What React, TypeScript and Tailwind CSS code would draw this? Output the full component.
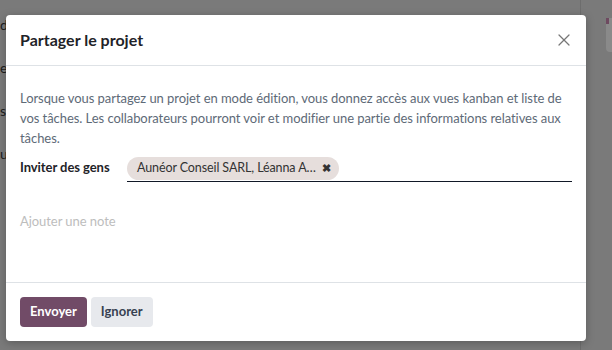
import { X } from 'lucide-react';

export default function App() {
  return (
    <div
      className="relative h-[350px] w-[612px] overflow-hidden bg-[#7a7a7a]"
      style={{ fontFamily: 'Lato, "Noto Sans", sans-serif' }}
    >
      {/* page behind the overlay */}
      <div className="absolute inset-0 flex">
        <div className="flex w-[6px] flex-col gap-[22px] pt-[14px] text-[14px] text-[#1d1d1d]">
          <span>d</span>
          <span>e</span>
          <span>s</span>
          <span>u</span>
        </div>
        <div className="ml-auto flex h-full w-[32px] border-l border-[#6d6d6d]">
          <div className="ml-auto mt-[18px] flex h-[34px] w-[6px] flex-col rounded-l bg-[#8a8a8a]">
            <div className="h-[6px] w-[3px] bg-[#6e4a60]" />
          </div>
        </div>
      </div>

      {/* dialog */}
      <div className="absolute left-[6px] top-[15px] flex h-[326px] w-[580px] flex-col rounded-[4px] bg-white shadow-[0_2px_8px_rgba(0,0,0,0.25)]">
        <div className="flex h-[51px] items-center justify-between border-b border-[#dee2e6] pl-[14px] pr-[12px]">
          <h1 className="text-[16px] font-bold text-[#1f2328]">Partager le projet</h1>
          <X className="h-[20px] w-[20px] text-[#777]" strokeWidth={1.5} />
        </div>

        <div className="flex flex-1 flex-col px-[14px] pt-[22px] text-[13px] tracking-[-0.06px]">
          <p className="leading-[20px] text-[#5e6a77]">
            Lorsque vous partagez un projet en mode édition, vous donnez accès aux vues kanban et liste de vos tâches.
            Les collaborateurs pourront voir et modifier une partie des informations relatives aux tâches.
          </p>

          <div className="mt-[9px] flex items-end">
            <span className="w-[107px] pb-[5px] font-bold text-[#1f2328]">Inviter des gens</span>
            <div className="flex flex-1 border-b border-[#111827] pb-[1px]">
              <span className="flex h-[23px] items-center gap-[6px] rounded-full bg-[#e6dedc] pl-[10px] pr-[8px] text-[12.5px] tracking-[-0.1px] text-[#333]">
                Aunéor Conseil SARL, Léanna A…
                <span className="text-[11px] font-bold text-[#333]">✖</span>
              </span>
            </div>
          </div>

          <div className="mt-[30px] text-[#bdbdbd]">Ajouter une note</div>
        </div>

        <div className="flex h-[59px] items-center gap-[4px] border-t border-[#dee2e6] px-[14px] text-[13px]">
          <button className="h-[30px] rounded-[4px] bg-[#714b67] px-[10px] font-bold text-white">
            Envoyer
          </button>
          <button className="h-[30px] rounded-[4px] bg-[#e7e9ed] px-[10px] font-bold text-[#374151]">
            Ignorer
          </button>
        </div>
      </div>
    </div>
  );
}
